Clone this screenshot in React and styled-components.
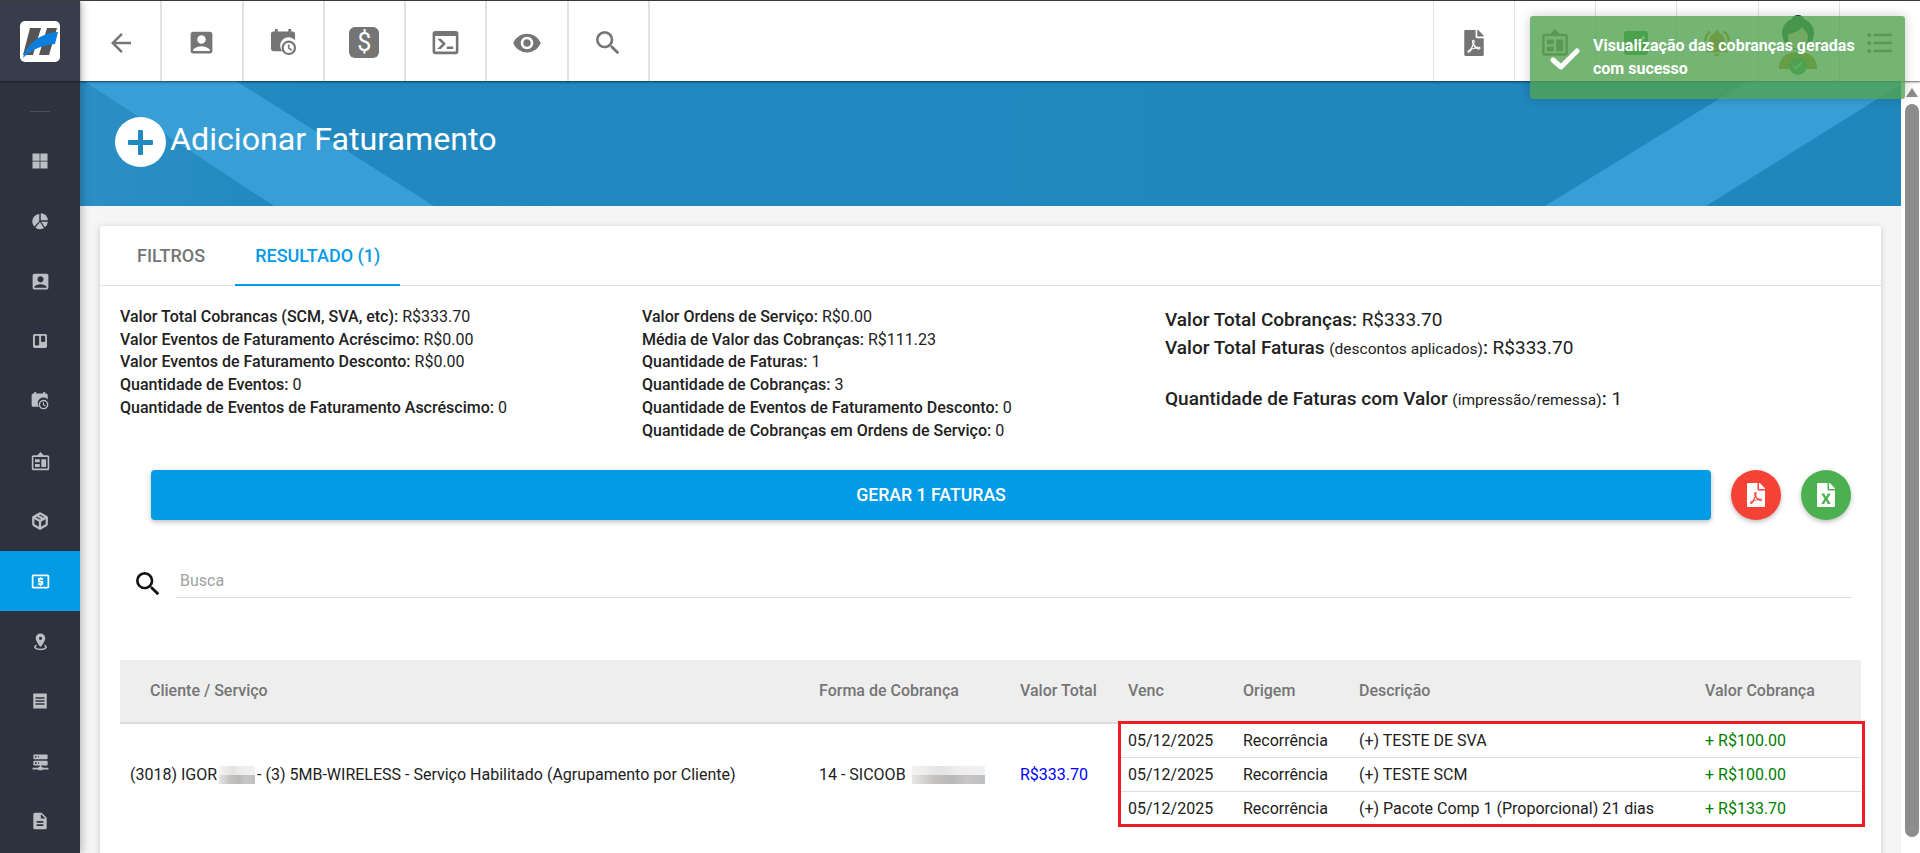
import React from "react";
import styled, { createGlobalStyle } from "styled-components";
import {
  MdArrowBack,
  MdAccountBox,
  MdVisibility,
  MdSearch,
  MdCheckBox,
  MdCheck,
  MdNotificationsActive,
  MdFormatListBulleted,
  MdLocalAtm,
  MdDescription,
  MdExpandMore,
} from "react-icons/md";
import { FaFilePdf, FaFileExcel, FaTrello } from "react-icons/fa";
import { FiPackage } from "react-icons/fi";

const GlobalStyle = createGlobalStyle`
  html, body { margin: 0; padding: 0; height: 100%; overflow: hidden; }
  body { font-family: Roboto, "Liberation Sans", sans-serif; color: #212121; background: #fff; }
  * { box-sizing: border-box; }
`;

const CalendarClock = ({ size = 24 }) => (
  <svg width={size} height={size} viewBox="0 0 26 28" fill="currentColor">
    <path d="M4 0h3v2.5h11V0h3v2.5h1.5A2.5 2.5 0 0 1 25 5v6.6A8.6 8.6 0 0 0 11.6 23H2.5A2.5 2.5 0 0 1 0 20.500V5a2.500 2.500 0 0 1 2.500-2.500H4z" />
    <path fillRule="evenodd" d="M18.500 12a7.500 7.500 0 1 1 0 15 7.500 7.500 0 0 1 0-15zm0 2.200a5.300 5.300 0 1 0 0 10.600 5.300 5.300 0 0 0 0-10.600zM17.500 16h1.700v3.400l2.800 1.700-.9 1.400-3.600-2.200z" />
  </svg>
);

const ConsoleIcon = ({ size = 24 }) => (
  <svg width={size} height={size} viewBox="0 0 24 24" fill="currentColor">
    <path d="M20,19V7H4V19H20M20,3A2,2 0 0,1 22,5V19A2,2 0 0,1 20,21H4A2,2 0 0,1 2,19V5C2,3.89 2.9,3 4,3H20M13,17V15H18V17H13M9.58,13L5.57,9H8.4L11.7,12.3C12.09,12.69 12.09,13.33 11.7,13.72L8.42,17H5.59L9.58,13Z" />
  </svg>
);

const BoardIcon = ({ size = 24 }) => (
  <svg width={size} height={size} viewBox="0 0 24 24" fill="currentColor">
    <path fillRule="evenodd" d="M12 0l4 4h5a2 2 0 0 1 2 2v15a2 2 0 0 1-2 2H3a2 2 0 0 1-2-2V6a2 2 0 0 1 2-2h5zM3 6.200V20.800h18V6.200z" />
    <path d="M5 9h6v4H5zM5 15h6v4H5zM13 9h6v10h-6z" />
  </svg>
);

const QuadIcon = ({ size = 24 }) => (
  <svg width={size} height={size} viewBox="0 0 24 24" fill="currentColor">
    <path d="M2 2h9.500v9.500H2zM12.500 2H22v9.500h-9.500zM2 12.500h9.500V22H2zM12.500 12.500H22V22h-9.500z" />
  </svg>
);

const PieIcon = ({ size = 24 }) => (
  <svg width={size} height={size} viewBox="0 0 24 24" fill="currentColor">
    <path d="M11 2.500v9.800l-6.500 7A10 10 0 0 1 11 2.500z" />
    <path d="M13 1.500A10 10 0 0 1 22.500 11H13z" />
    <path d="M13.500 13h9a10 10 0 0 1-4 7.400z" />
    <path d="M12 13.400l5.200 8A10 10 0 0 1 5.800 20.500z" />
  </svg>
);

const PinIcon = ({ size = 24 }) => (
  <svg width={size} height={size} viewBox="0 0 24 24" fill="currentColor">
    <path d="M12,2C15.31,2 18,4.66 18,7.95C18,12.41 12,19 12,19C12,19 6,12.41 6,7.95C6,4.66 8.69,2 12,2M12,6A2,2 0 0,0 10,8A2,2 0 0,0 12,10A2,2 0 0,0 14,8A2,2 0 0,0 12,6M20,19C20,21.21 16.42,23 12,23C7.58,23 4,21.21 4,19C4,17.71 5.22,16.56 7.11,15.83L7.75,16.74C6.67,17.19 6,17.81 6,18.5C6,19.88 8.69,21 12,21C15.31,21 18,19.88 18,18.5C18,17.81 17.33,17.19 16.25,16.74L16.89,15.83C18.78,16.56 20,17.71 20,19Z" />
  </svg>
);

const ReceiptIcon = ({ size = 24 }) => (
  <svg width={size} height={size} viewBox="0 0 24 24" fill="currentColor">
    <path fillRule="evenodd" d="M3 2h18v20H3zM6 7v2h12V7zM6 11v2h12v-2zM6 15v2h12v-2z" />
  </svg>
);

const ServerIcon = ({ size = 24 }) => (
  <svg width={size} height={size} viewBox="0 0 24 24" fill="currentColor">
    <path d="M13,19H14A1,1 0 0,1 15,20H22V22H15A1,1 0 0,1 14,23H10A1,1 0 0,1 9,22H2V20H9A1,1 0 0,1 10,19H11V17H4A1,1 0 0,1 3,16V12A1,1 0 0,1 4,11H20A1,1 0 0,1 21,12V16A1,1 0 0,1 20,17H13V19M4,3H20A1,1 0 0,1 21,4V8A1,1 0 0,1 20,9H4A1,1 0 0,1 3,8V4A1,1 0 0,1 4,3M9,7H10V5H9V7M9,15H10V13H9V15M5,5V7H7V5H5M5,13V15H7V13H5Z" />
  </svg>
);

const LogoMark = () => (
  <svg width="40" height="40" viewBox="0 0 40 40">
    <path d="M10 7h11l-8 27H3z" fill="#555" />
    <path d="M27 7h10l-8 27H19z" fill="#555" />
    <path d="M38 11l-3 12c-11 1-22 4-32 14 4-14 17-25 35-26z" fill="#0b7fe0" />
  </svg>
);

const Avatar = () => (
  <svg width="50" height="56" viewBox="0 0 50 56">
    <path d="M6 54c0-12 7-17 19-17s19 5 19 17z" fill="#b48a10" />
    <path d="M25 0c3 0 6 2 6 4 6 2 10 8 10 14 0 8-6 17-16 17S9 26 9 18c0-6 4-12 10-14 0-2 3-4 6-4z" fill="#14603f" />
    <ellipse cx="25" cy="22" rx="10" ry="12" fill="#f0c9a0" />
    <path d="M14 19c5 0 13-3 15-7 2 3 5 6 7 7l-1-8-10-3-10 3z" fill="#14603f" />
  </svg>
);

const Page = styled.div`
  display: flex;
  height: 853px;
  border-top: 1px solid #3a3a3a;
  overflow: hidden;
  position: relative;
`;

const Sidebar = styled.aside`
  width: 80px;
  flex: none;
  background: #2e323f;
  color: #bcbec4;
  box-shadow: 2px 0 8px rgba(0, 0, 0, 0.25);
  position: relative;
  z-index: 3;
`;

const LogoBar = styled.div`
  height: 80px;
  background: #393d4b;
  display: flex;
  align-items: center;
  justify-content: center;
  box-shadow: 0 1px 2px rgba(0, 0, 0, 0.4);
`;

const LogoBox = styled.div`
  width: 40px;
  height: 41px;
  background: #fff;
  border-radius: 5px;
  display: flex;
  align-items: center;
  justify-content: center;
`;

const NavRule = styled.div`
  width: 20px;
  height: 1px;
  background: #4a4e5b;
  margin: 30px auto 19px;
`;

const SideItem = styled.div`
  height: 60px;
  display: flex;
  align-items: center;
  justify-content: center;
  background: ${(p) => (p.$active ? "#039be5" : "transparent")};
  color: ${(p) => (p.$active ? "#fff" : "inherit")};
`;

const Main = styled.div`
  flex: 1;
  min-width: 0;
  display: flex;
  flex-direction: column;
`;

const Toolbar = styled.header`
  height: 80px;
  flex: none;
  background: #fff;
  display: flex;
  justify-content: space-between;
  box-shadow: 0 1px 2px rgba(0, 0, 0, 0.6);
  position: relative;
  z-index: 2;
  color: #757575;
`;

const ToolGroup = styled.div`
  display: flex;
  padding-left: ${(p) => (p.$offset ? "1px" : "0")};
`;

const ToolCell = styled.div`
  width: 81.250px;
  display: flex;
  align-items: center;
  justify-content: center;
  padding-top: 3px;
  border-right: ${(p) => (p.$left ? "0" : "2px solid #e2e2e2")};
  border-left: ${(p) => (p.$left ? "1px solid #e2e2e2" : "0")};
  position: relative;
`;

const DollarBox = styled.span`
  width: 30px;
  height: 31px;
  background: #757575;
  border-radius: 6px;
  color: #fff;
  font-size: 25px;
  font-weight: 400;
  display: flex;
  align-items: center;
  justify-content: center;
`;

const AvatarWrap = styled.div`
  display: flex;
  align-items: center;
  margin-left: 4px;
  position: relative;
  > svg:last-child { color: #666; margin-left: -12px; }
`;

const AvatarBadge = styled.span`
  position: absolute;
  left: 16px;
  bottom: -4px;
  width: 18px;
  height: 18px;
  border-radius: 50%;
  background: #43a047;
  color: #dfd;
  display: flex;
  align-items: center;
  justify-content: center;
`;

const Toast = styled.div`
  position: absolute;
  top: 15px;
  right: 15px;
  width: 375px;
  height: 83px;
  z-index: 5;
  background: rgba(81, 163, 81, 0.8);
  border-radius: 3px;
  box-shadow: 0 0 12px rgba(0, 0, 0, 0.2);
  color: #fff;
  font-size: 16px;
  font-weight: 700;
  line-height: 23px;
  display: flex;
  padding: 18px 40px 0 20px;
  gap: 13px;
`;

const ToastCheck = styled.svg`
  flex: none;
  margin-top: 13px;
`;

const ContentRow = styled.div`
  flex: 1;
  min-height: 0;
  display: flex;
`;

const Scroller = styled.div`
  flex: 1;
  min-width: 0;
  background: #f5f5f5;
  overflow: hidden;
`;

const Scrollbar = styled.div`
  width: 19px;
  flex: none;
  background: #fff;
  padding: 7px 1px 0 4px;
`;

const ScrollArrow = styled.div`
  width: 0;
  height: 0;
  margin: 0 auto 7px;
  border-left: 6px solid transparent;
  border-right: 6px solid transparent;
  border-bottom: 9px solid #8c8c8c;
`;

const ScrollThumb = styled.div`
  height: 733px;
  background: #8c8c8c;
  border-radius: 7px;
`;

const Hero = styled.section`
  height: 125px;
  background: linear-gradient(90deg, #2b8fc4 0, #2189bf 12%, #2087bd 100%);
  position: relative;
  overflow: hidden;
  display: flex;
  align-items: center;
  padding: 0 0 3px 35px;
  color: #fff;
  &::before, &::after {
    content: "";
    position: absolute;
    inset: 0;
    background: #389fd6;
  }
  &::before {
    clip-path: polygon(4px 0, 156px 0, 354px 125px, 194px 125px);
  }
  &::after {
    clip-path: polygon(1668px 0, 1826px 0, 1626px 125px, 1465px 125px);
  }
`;

const HeroIcon = styled.span`
  width: 51px;
  height: 50px;
  border-radius: 50%;
  background: #fff;
  position: relative;
  z-index: 1;
  flex: none;
  margin-right: 4px;
  &::before, &::after {
    content: "";
    position: absolute;
    background: #2189bf;
    border-radius: 1px;
  }
  &::before { left: 13px; top: 22.500px; width: 25px; height: 5px; }
  &::after { left: 23px; top: 12.500px; width: 5px; height: 25px; }
`;

const HeroTitle = styled.h1`
  margin: 0 0 7px;
  font-size: 32.200px;
  font-weight: 400;
  position: relative;
  z-index: 1;
`;

const Card = styled.main`
  margin: 20px 20px 0;
  height: 640px;
  background: #fff;
  box-shadow: 0 1px 6px rgba(0, 0, 0, 0.18);
  border-radius: 2px 2px 0 0;
`;

const Tabs = styled.nav`
  height: 60px;
  display: flex;
  border-bottom: 1px solid #e0e0e0;
  padding-left: 20px;
`;

const Tab = styled.div`
  height: 60px;
  padding: 0 ${(p) => (p.$active ? "20px" : "17px")};
  margin-left: ${(p) => (p.$active ? "13px" : "0")};
  display: flex;
  align-items: center;
  font-size: 18px;
  font-weight: 500;
  color: ${(p) => (p.$active ? "#039be5" : "#757575")};
  border-bottom: 2px solid ${(p) => (p.$active ? "#039be5" : "transparent")};
`;

const Summary = styled.div`
  display: grid;
  grid-template-columns: 522px 522px 1fr;
  padding: 20px 20px 0;
  height: 184px;
`;

const Line = styled.div`
  font-size: 16px;
  line-height: 22.700px;
  white-space: nowrap;
  strong { font-weight: 500; }
`;

const BigLines = styled.div`
  padding-left: 1px;
`;

const BigLine = styled.div`
  font-size: 19px;
  line-height: 28px;
  margin-bottom: ${(p) => (p.$gap ? "22px" : "0")};
  white-space: nowrap;
  strong { font-weight: 500; }
  small { font-size: 15.500px; font-weight: 400; }
`;

const Actions = styled.div`
  display: flex;
  gap: 20px;
  margin: 0 30px 0 51px;
`;

const GenerateButton = styled.button`
  flex: 1;
  height: 50px;
  border: 0;
  border-radius: 4px;
  background: #039be5;
  color: #fff;
  font: 500 17.700px Roboto, sans-serif;
  box-shadow: 0 2px 5px rgba(0, 0, 0, 0.26);
`;

const RoundButton = styled.button`
  width: 50px;
  height: 50px;
  flex: none;
  padding: 0;
  border: 0;
  border-radius: 50%;
  background: ${(p) => p.$color};
  color: #fff;
  display: flex;
  align-items: center;
  justify-content: center;
  box-shadow: 0 2px 5px rgba(0, 0, 0, 0.26);
`;

const SearchRow = styled.div`
  display: flex;
  align-items: flex-end;
  margin: 44px 29px 0 32px;
  svg { flex: none; margin: 0 12px -2px 0; color: #111; }
`;

const SearchField = styled.div`
  flex: 1;
  height: 34px;
  border-bottom: 1px solid #ddd;
  padding: 7px 4px 0;
  font-size: 16px;
  color: #a0a0a0;
`;

const TableWrap = styled.div`
  position: relative;
  margin: 62px 20px 0 20px;
`;

const RedBox = styled.div`
  position: absolute;
  left: 998px;
  top: 61px;
  width: 747px;
  height: 106px;
  border: 3px solid #ee1c25;
  pointer-events: none;
`;

const Table = styled.table`
  width: 1741px;
  table-layout: fixed;
  border-collapse: collapse;
  font-size: 16px;
`;

const Head = styled.th`
  height: 63px;
  background: #eee;
  border-bottom: 2px solid #ddd;
  color: #757575;
  font-weight: 500;
  text-align: left;
  padding: 0 8px 1px ${(p) => (p.$first ? "30px" : "8px")};
`;

const Cell = styled.td`
  height: 34px;
  padding: 0 8px 0 ${(p) => (p.$first ? "10px" : "8px")};
  white-space: nowrap;
  color: ${(p) => p.$color || "#212121"};
  border-bottom: ${(p) => (p.$lined ? "1px solid #ddd" : "0")};
`;

const Redact = styled.span`
  display: inline-block;
  width: ${(p) => p.$w}px;
  height: 18px;
  vertical-align: middle;
  margin: 0 2px;
  background:
    linear-gradient(90deg, #f3f3f3, #e3e3e3 40%, #ededed 60%, #f0f0f0) top / 100% 50% no-repeat,
    linear-gradient(90deg, #e6e6e6, #c6c1c0 30%, #b9b9b9 55%, #c9c6c6 75%, #bcc0c2) bottom / 100% 50% no-repeat;
`;

const sideIcons = [
  <QuadIcon size={18} />,
  <PieIcon size={18} />,
  <MdAccountBox size={21} />,
  <FaTrello size={16} />,
  <CalendarClock size={18} />,
  <BoardIcon size={19} />,
  <FiPackage size={18} strokeWidth={3} />,
  <MdLocalAtm size={21} />,
  <PinIcon size={19} />,
  <ReceiptIcon size={18} />,
  <ServerIcon size={19} />,
  <MdDescription size={20} />,
];

const charges = [
  { desc: "(+) TESTE DE SVA", value: "+ R$100.00" },
  { desc: "(+) TESTE SCM", value: "+ R$100.00" },
  { desc: "(+) Pacote Comp 1 (Proporcional) 21 dias", value: "+ R$133.70" },
];

export default function App() {
  return (
    <>
      <GlobalStyle />
      <Page>
        <Sidebar>
          <LogoBar>
            <LogoBox>
              <LogoMark />
            </LogoBox>
          </LogoBar>
          <NavRule />
          {sideIcons.map((icon, i) => (
            <SideItem key={i} $active={i === 7}>
              {icon}
            </SideItem>
          ))}
        </Sidebar>
        <Main>
          <Toolbar>
            <ToolGroup $offset>
              <ToolCell><MdArrowBack size={30} /></ToolCell>
              <ToolCell><MdAccountBox size={29} /></ToolCell>
              <ToolCell><CalendarClock size={27} /></ToolCell>
              <ToolCell><DollarBox>$</DollarBox></ToolCell>
              <ToolCell><ConsoleIcon size={31} /></ToolCell>
              <ToolCell><MdVisibility size={30} /></ToolCell>
              <ToolCell><MdSearch size={32} /></ToolCell>
            </ToolGroup>
            <ToolGroup>
              <ToolCell $left><FaFilePdf size={26} /></ToolCell>
              <ToolCell $left><BoardIcon size={28} /></ToolCell>
              <ToolCell $left><MdCheckBox size={32} color="#2e9e3f" /></ToolCell>
              <ToolCell $left><MdNotificationsActive size={32} color="#d9822b" /></ToolCell>
              <ToolCell $left>
                <AvatarWrap>
                  <Avatar />
                  <AvatarBadge><MdCheck size={13} /></AvatarBadge>
                  <MdExpandMore size={18} />
                </AvatarWrap>
              </ToolCell>
              <ToolCell $left><MdFormatListBulleted size={32} /></ToolCell>
            </ToolGroup>
          </Toolbar>
          <ContentRow>
            <Scroller>
              <Hero>
                <HeroIcon />
                <HeroTitle>Adicionar Faturamento</HeroTitle>
              </Hero>
              <Card>
                <Tabs>
                  <Tab>FILTROS</Tab>
                  <Tab $active>RESULTADO (1)</Tab>
                </Tabs>
                <Summary>
                  <div>
                    <Line><strong>Valor Total Cobrancas (SCM, SVA, etc):</strong> R$333.70</Line>
                    <Line><strong>Valor Eventos de Faturamento Acréscimo:</strong> R$0.00</Line>
                    <Line><strong>Valor Eventos de Faturamento Desconto:</strong> R$0.00</Line>
                    <Line><strong>Quantidade de Eventos:</strong> 0</Line>
                    <Line><strong>Quantidade de Eventos de Faturamento Ascréscimo:</strong> 0</Line>
                  </div>
                  <div>
                    <Line><strong>Valor Ordens de Serviço:</strong> R$0.00</Line>
                    <Line><strong>Média de Valor das Cobranças:</strong> R$111.23</Line>
                    <Line><strong>Quantidade de Faturas:</strong> 1</Line>
                    <Line><strong>Quantidade de Cobranças:</strong> 3</Line>
                    <Line><strong>Quantidade de Eventos de Faturamento Desconto:</strong> 0</Line>
                    <Line><strong>Quantidade de Cobranças em Ordens de Serviço:</strong> 0</Line>
                  </div>
                  <BigLines>
                    <BigLine><strong>Valor Total Cobranças:</strong> R$333.70</BigLine>
                    <BigLine $gap><strong>Valor Total Faturas</strong> <small>(descontos aplicados)</small><strong>:</strong> R$333.70</BigLine>
                    <BigLine><strong>Quantidade de Faturas com Valor</strong> <small>(impressão/remessa)</small><strong>:</strong> 1</BigLine>
                  </BigLines>
                </Summary>
                <Actions>
                  <GenerateButton>GERAR 1 FATURAS</GenerateButton>
                  <RoundButton $color="#f44336"><FaFilePdf size={24} /></RoundButton>
                  <RoundButton $color="#4caf50"><FaFileExcel size={24} /></RoundButton>
                </Actions>
                <SearchRow>
                  <MdSearch size={32} />
                  <SearchField>Busca</SearchField>
                </SearchRow>
                <TableWrap>
                  <Table>
                    <colgroup>
                      <col width="691" />
                      <col width="201" />
                      <col width="108" />
                      <col width="115" />
                      <col width="116" />
                      <col width="346" />
                      <col width="164" />
                    </colgroup>
                    <thead>
                      <tr>
                        <Head $first>Cliente / Serviço</Head>
                        <Head>Forma de Cobrança</Head>
                        <Head>Valor Total</Head>
                        <Head>Venc</Head>
                        <Head>Origem</Head>
                        <Head>Descrição</Head>
                        <Head>Valor Cobrança</Head>
                      </tr>
                    </thead>
                    <tbody>
                      {charges.map((c, i) => (
                        <tr key={i}>
                          {i === 0 && (
                            <>
                              <Cell $first rowSpan={3}>
                                (3018) IGOR<Redact $w={36} />- (3) 5MB-WIRELESS - Serviço Habilitado (Agrupamento por Cliente)
                              </Cell>
                              <Cell rowSpan={3}>14 - SICOOB <Redact $w={73} /></Cell>
                              <Cell rowSpan={3} $color="#0000ff">R$333.70</Cell>
                            </>
                          )}
                          <Cell $lined={i < 2}>05/12/2025</Cell>
                          <Cell $lined={i < 2}>Recorrência</Cell>
                          <Cell $lined={i < 2}>{c.desc}</Cell>
                          <Cell $lined={i < 2} $color="#008000">{c.value}</Cell>
                        </tr>
                      ))}
                    </tbody>
                  </Table>
                  <RedBox />
                </TableWrap>
              </Card>
            </Scroller>
            <Scrollbar>
              <ScrollArrow />
              <ScrollThumb />
            </Scrollbar>
          </ContentRow>
        </Main>
        <Toast>
          <ToastCheck width="30" height="24" viewBox="0 0 30 24">
            <path d="M3 13l8 7L27 4" fill="none" stroke="#fff" strokeWidth="5" strokeLinecap="round" strokeLinejoin="round" />
          </ToastCheck>
          <div>Visualização das cobranças geradas com sucesso</div>
        </Toast>
      </Page>
    </>
  );
}
